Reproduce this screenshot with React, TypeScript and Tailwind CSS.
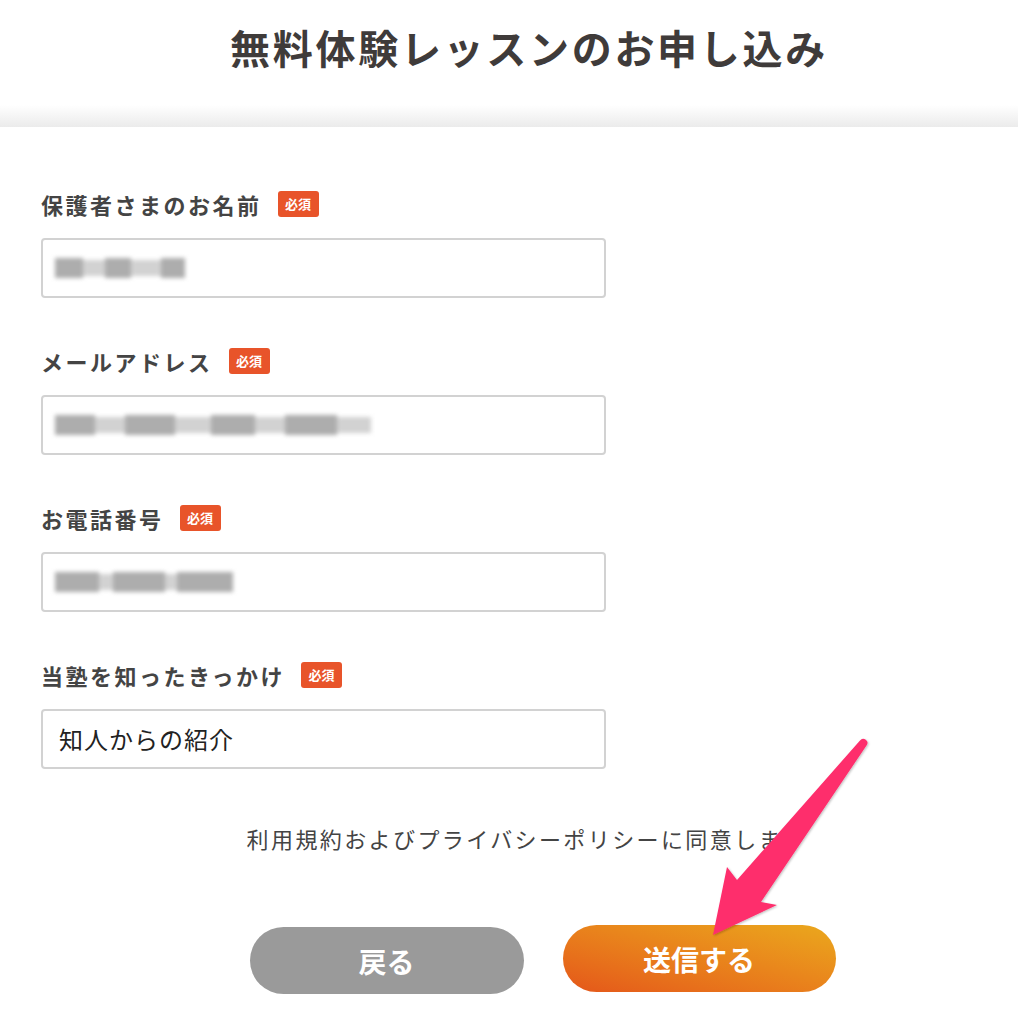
import React from 'react';

const font = { fontFamily: '"Noto Sans CJK JP", "Noto Sans", sans-serif' };

const Badge = () => (
  <span className="ml-[16px] inline-flex h-[26px] w-[41px] items-center justify-center rounded-[3px] bg-[#e8542a] text-[13px] font-bold text-white">
    必須
  </span>
);

// pixelated placeholder for the blurred input values
const Blur = ({ widths }: { widths: number[] }) => (
  <div className="flex h-[32px] items-center blur-[2px]">
    {widths.map((w, i) => (
      <div
        key={i}
        className={i % 2 === 0 ? 'h-[20px] bg-[#adadad]' : 'h-[16px] bg-[#d2d2d2]'}
        style={{ width: w }}
      />
    ))}
  </div>
);

const Field = ({ label, children }: { label: string; children: React.ReactNode }) => (
  <div className="flex flex-col">
    <div className="flex h-[34px] items-center">
      <span className="text-[22px] font-bold tracking-[2.5px] text-[#444]">{label}</span>
      <Badge />
    </div>
    <div className="mt-[17px] flex h-[60px] w-[565px] items-center rounded-[4px] border-2 border-[#d2d2d2] px-[12px]">
      {children}
    </div>
  </div>
);

export default function App() {
  return (
    <div className="relative min-h-[1024px] w-[1018px] overflow-hidden bg-white" style={font}>
      <header className="flex h-[105px] items-start justify-center pt-[17px]">
        <h1 className="pl-[40px] text-[40px] font-bold tracking-[2.7px] text-[#3f3b3a]">無料体験レッスンのお申し込み</h1>
      </header>
      <div className="h-[22px] bg-linear-to-b from-white to-[#ebebeb]" />

      <main className="flex flex-col px-[41px] pt-[60px]">
        <div className="flex flex-col gap-[46px]">
          <Field label="保護者さまのお名前">
            <Blur widths={[28, 22, 26, 30, 24]} />
          </Field>
          <Field label="メールアドレス">
            <Blur widths={[40, 30, 50, 36, 44, 30, 52, 34]} />
          </Field>
          <Field label="お電話番号">
            <Blur widths={[44, 14, 52, 12, 56]} />
          </Field>
          <Field label="当塾を知ったきっかけ">
            <span className="pl-[4px] text-[24px] tracking-[1px] text-[#222]">知人からの紹介</span>
          </Field>
        </div>

        <p className="mt-[52px] h-[34px] pl-[36px] text-center text-[22px] leading-[34px] tracking-[2.4px] text-[#444]">
          利用規約およびプライバシーポリシーに同意します
        </p>

        <div className="mt-[72px] flex justify-center gap-[39px] pl-[67px]">
          <button className="h-[67px] w-[274px] rounded-full bg-[#9a9a9a] text-[28px] font-bold text-white">
            戻る
          </button>
          <button className="-mt-[2px] h-[67px] w-[273px] rounded-full bg-linear-to-tr from-[#e4561a] to-[#eaa81d] text-[28px] font-bold text-white">
            送信する
          </button>
        </div>
      </main>

      <svg className="pointer-events-none absolute left-0 top-0" width="1018" height="1024">
        <defs>
          <filter id="sh" x="-20%" y="-20%" width="140%" height="140%">
            <feDropShadow dx="1" dy="1" stdDeviation="1.2" floodColor="#000" floodOpacity="0.25" />
          </filter>
        </defs>
        <path
          d="M860 740.5 L737 880 L727 867 L713 935 L777 905 L761 902 L866.5 745.5 A4 4 0 0 0 860 740.5 Z"
          fill="#fe2d6c"
          filter="url(#sh)"
        />
      </svg>
    </div>
  );
}
